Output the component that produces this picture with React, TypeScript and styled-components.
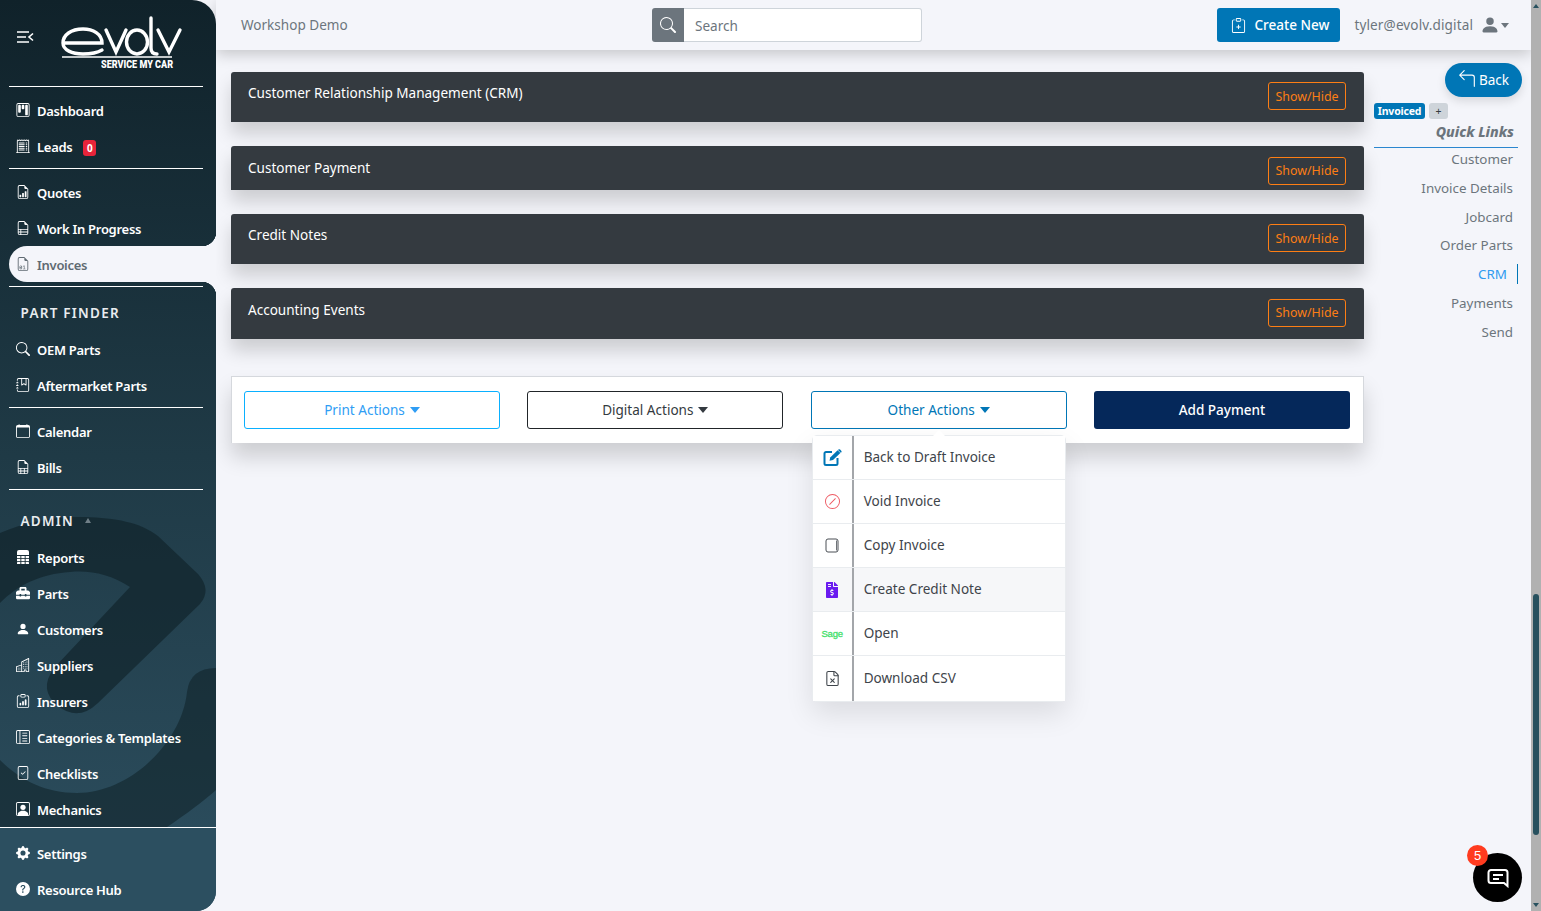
import React from 'react';
import styled, { createGlobalStyle } from 'styled-components';
import {
  BsKanban,
  BsReceiptCutoff,
  BsFileEarmarkBarGraph,
  BsFileEarmarkRuled,
  BsFileEarmarkBinary,
  BsSearch,
  BsJournalBookmark,
  BsCalendar,
  BsFileEarmarkSpreadsheet,
  BsPersonFill,
  BsBuildings,
  BsClipboardData,
  BsLayoutTextSidebarReverse,
  BsFileCheck,
  BsPersonSquare,
  BsGearFill,
  BsQuestionCircleFill,
  BsArrow90DegLeft,
  BsClipboardPlus,
  BsSlashCircle,
} from 'react-icons/bs';
import { FaToolbox, FaFileInvoiceDollar } from 'react-icons/fa';
import { FileX } from 'lucide-react';

const PAGE_BG = '#f4f5fa';
const BLUE = '#0076b6';

const GlobalStyle = createGlobalStyle`
  html, body {
    margin: 0;
    height: 100%;
    overflow: hidden;
    background: ${PAGE_BG};
    font-family: "Noto Sans", "Open Sans", sans-serif;
    font-size: 13.55px;
    color: #495057;
  }
  * {
    box-sizing: border-box;
  }
`;

const Shell = styled.div`
  display: flex;
  height: 911px;
  position: relative;
  overflow: hidden;
`;

/* sidebar */

const Sidebar = styled.aside`
  position: relative;
  z-index: 3;
  flex: 0 0 216px;
  display: flex;
  flex-direction: column;
  height: 911px;
  color: #fff;
  background: linear-gradient(180deg, #10222a 0%, #1f3a46 50%, #2d4f60 100%);
  border-radius: 0 24px 20px 0;
  padding-left: 9px;
`;

const Swoosh = styled.svg`
  position: absolute;
  left: 0;
  top: 0;
  width: 216px;
  height: 911px;
  pointer-events: none;
`;

const LogoRow = styled.div`
  position: relative;
  height: 86px;
  width: 194px;
  flex: none;
`;

const MenuToggle = styled.svg`
  position: absolute;
  left: 7px;
  top: 30px;
  width: 18px;
  height: 15px;
`;

const LogoMark = styled.svg`
  position: absolute;
  left: 52px;
  top: 16px;
  width: 125px;
  height: 44px;
`;

const LogoSub = styled.span`
  position: absolute;
  left: 92px;
  top: 59px;
  font-family: "Roboto", "Liberation Sans", sans-serif;
  font-weight: 900;
  font-size: 11px;
  line-height: 12px;
  white-space: nowrap;
  transform: scaleX(0.82);
  transform-origin: left center;
`;

const Rule = styled.hr`
  position: relative;
  flex: none;
  width: 194px;
  height: 1px;
  border: 0;
  margin: 0 0 6px;
  background: #fff;
`;

const SpacedRule = styled(Rule)`
  margin-top: 3px;
`;

const NavRow = styled.a<{ $active?: boolean }>`
  position: relative;
  flex: none;
  display: flex;
  align-items: center;
  height: 36px;
  padding-left: 7px;
  padding-top: ${(p) => (p.$active ? '2px' : '0')};
  font-size: 13px;
  font-weight: 600;
  letter-spacing: -0.28px;
  color: ${(p) => (p.$active ? '#5f6a72' : '#fff')};
  background: ${(p) => (p.$active ? PAGE_BG : 'transparent')};
  border-radius: ${(p) => (p.$active ? '18px 0 0 18px' : '0')};
  margin-top: ${(p) => (p.$active ? '-1px' : '0')};
  margin-bottom: ${(p) => (p.$active ? '1px' : '0')};

  ${(p) =>
    p.$active &&
    `
    &::before, &::after {
      content: '';
      position: absolute;
      right: 0;
      width: 14px;
      height: 14px;
    }
    &::before {
      top: -14px;
      background: radial-gradient(circle at 0 0, transparent 14px, ${PAGE_BG} 14.5px);
    }
    &::after {
      bottom: -14px;
      background: radial-gradient(circle at 0 100%, transparent 14px, ${PAGE_BG} 14.5px);
    }
  `}
`;

const NavIcon = styled.span`
  flex: 0 0 14px;
  display: flex;
  justify-content: center;
  margin-right: 7px;
  font-size: 14px;
  margin-top: -3px;
`;

const Count = styled.span`
  margin-left: 11px;
  margin-top: 1px;
  width: 13px;
  height: 16px;
  border-radius: 3px;
  background: #e8243a;
  color: #fff;
  font-size: 10px;
  font-weight: 700;
  line-height: 16px;
  text-align: center;
  letter-spacing: 0;
`;

const SectionTitle = styled.div<{ $tall?: boolean }>`
  position: relative;
  flex: none;
  display: flex;
  align-items: center;
  height: 39px;
  margin-top: ${(p) => (p.$tall ? '5px' : '0')};
  padding-left: 11.5px;
  font-size: 13.5px;
  font-weight: 600;
  letter-spacing: 1.25px;
  color: #e9ecef;
`;

const SectionCaret = styled.span`
  width: 0;
  height: 0;
  margin-left: 11px;
  border-left: 3.5px solid transparent;
  border-right: 3.5px solid transparent;
  border-bottom: 5px solid #6f7f87;
`;

const SideFooter = styled.div`
  position: absolute;
  left: 0;
  right: 0;
  bottom: 0;
  height: 84px;
  padding: 8px 0 0 9px;
  background: #2c4f60;
  border-top: 1px solid #fff;
  border-radius: 0 0 20px 0;
`;

/* main column */

const Main = styled.div`
  flex: 1;
  min-width: 0;
  display: flex;
  flex-direction: column;
`;

const TopBar = styled.header`
  position: relative;
  z-index: 2;
  flex: 0 0 50px;
  display: flex;
  align-items: center;
  padding: 0 22px 0 25px;
  background: ${PAGE_BG};
  box-shadow: 0 4px 14px rgba(0, 0, 0, 0.2);
`;

const Workspace = styled.span`
  flex: 0 0 411px;
  margin-bottom: 1px;
  color: #6c757d;
`;

const SearchGroup = styled.div`
  display: flex;
  width: 270px;
  height: 34px;
`;

const SearchAddon = styled.span`
  flex: 0 0 32px;
  display: flex;
  align-items: center;
  justify-content: center;
  background: #6c757d;
  color: #fff;
  border-radius: 3px 0 0 3px;
  font-size: 16px;
`;

const SearchInput = styled.input`
  flex: 1;
  min-width: 0;
  padding: 2px 11px 0;
  border: 1px solid #ced4da;
  border-left: 0;
  border-radius: 0 3px 3px 0;
  background: #fff;
  font: inherit;
  &::placeholder {
    color: #6c757d;
    opacity: 1;
  }
`;

const CreateButton = styled.button`
  margin-left: auto;
  display: flex;
  align-items: center;
  gap: 8px;
  width: 123px;
  height: 34px;
  padding: 0 0 0 14px;
  border: 0;
  border-radius: 3px;
  background: ${BLUE};
  color: #fff;
  font: inherit;
  font-weight: 500;
  svg {
    font-size: 15px;
  }
`;

const UserEmail = styled.span`
  margin-left: 14px;
  color: #6c757d;
  letter-spacing: 0.12px;
`;

const UserIcon = styled.span`
  display: flex;
  margin-left: 7px;
  color: #6c757d;
  font-size: 20px;
`;

const Caret = styled.span<{ $color?: string }>`
  display: inline-block;
  width: 0;
  height: 0;
  border-left: 5px solid transparent;
  border-right: 5px solid transparent;
  border-top: 6px solid ${(p) => p.$color || 'currentColor'};
`;

const UserCaret = styled(Caret)`
  margin-left: 1px;
  border-left-width: 4.5px;
  border-right-width: 4.5px;
  border-top-width: 5px;
  color: #6c757d;
`;

const Body = styled.div`
  flex: 1;
  display: flex;
  padding-left: 15px;
`;

const Content = styled.div`
  flex: 0 0 1133px;
  padding-top: 22px;
`;

const Panel = styled.section<{ $height: number; $top: number }>`
  display: flex;
  justify-content: space-between;
  height: ${(p) => p.$height}px;
  margin-bottom: 24px;
  padding: ${(p) => p.$top}px 18px 0 17px;
  border-radius: 3px 3px 0 0;
  background: #343a40;
  color: #fff;
  box-shadow: 0 12px 18px rgba(0, 0, 0, 0.16);
`;

const PanelTitle = styled.h3`
  margin: 0;
  font-size: 13.55px;
  font-weight: 400;
  line-height: 22px;
`;

const ShowHide = styled.button`
  width: 78px;
  height: 28px;
  padding: 0;
  border: 1px solid #fd7e14;
  border-radius: 3px;
  background: transparent;
  color: #fd7e14;
  font: inherit;
  font-size: 12.4px;
`;

const ActionsCard = styled.div`
  display: grid;
  grid-template-columns: repeat(4, 256px);
  justify-content: space-between;
  margin-top: 37px;
  height: 67px;
  padding: 14px 13px 0 12px;
  background: #fff;
  border: 1px solid #d5d8dd;
  border-width: 1px 1px 0 1px;
  box-shadow: 0 14px 20px rgba(0, 0, 0, 0.16);
`;

const ActionWrap = styled.div`
  position: relative;
`;

const ActionButton = styled.button<{ $border: string; $color: string }>`
  display: flex;
  align-items: center;
  justify-content: center;
  gap: 5px;
  width: 100%;
  height: 38px;
  border: 1px solid ${(p) => p.$border};
  border-radius: 3px;
  background: #fff;
  color: ${(p) => p.$color};
  font: inherit;
`;

const PayButton = styled.button`
  height: 38px;
  border: 0;
  border-radius: 3px;
  background: #05285a;
  color: #fff;
  font: inherit;
  font-weight: 500;
`;

const Dropdown = styled.ul`
  position: absolute;
  left: 1px;
  top: 44px;
  z-index: 2;
  width: 254px;
  margin: 0;
  padding: 0;
  list-style: none;
  background: #fff;
  border: 1px solid #e9ecef;
  border-radius: 5px;
  box-shadow: 0 12px 28px rgba(0, 0, 0, 0.1);

  &::before {
    content: '';
    position: absolute;
    left: 120px;
    top: -6px;
    width: 0;
    height: 0;
    border-left: 6px solid transparent;
    border-right: 6px solid transparent;
    border-bottom: 6px solid #fff;
  }
`;

const DropItem = styled.li<{ $hover?: boolean }>`
  display: flex;
  align-items: stretch;
  height: 44.1px;
  background: ${(p) => (p.$hover ? '#f6f7f9' : '#fff')};
  border-bottom: 1px solid #e9ecef;
  &:last-child {
    border-bottom: 0;
  }
`;

const DropIcon = styled.span<{ $color: string; $size: number }>`
  flex: 0 0 41px;
  display: flex;
  align-items: center;
  justify-content: center;
  border-right: 2px solid #a3a6aa;
  color: ${(p) => p.$color};
  font-size: ${(p) => p.$size}px;
`;

const SageMark = styled.span`
  font-family: "Liberation Sans", sans-serif;
  font-size: 9.5px;
  font-weight: 400;
  letter-spacing: -0.2px;
  color: #3fe06a;
  -webkit-text-stroke: 0.3px #3fe06a;
`;

const DropLabel = styled.span`
  display: flex;
  align-items: center;
  padding: 0 0 1px 10px;
  color: #3e444a;
`;

/* right rail */

const Rail = styled.nav`
  flex: 0 0 144px;
  margin-left: 10px;
  padding-top: 13px;
`;

const BackButton = styled.button`
  display: flex;
  align-items: center;
  justify-content: center;
  gap: 3px;
  width: 77px;
  height: 34px;
  margin: 0 -4px 0 auto;
  padding: 0;
  border: 0;
  border-radius: 17px;
  background: ${BLUE};
  color: #fff;
  font: inherit;
  box-shadow: 0 4px 10px rgba(0, 0, 0, 0.12);
  svg {
    font-size: 18px;
    margin-top: -3px;
  }
`;

const StatusRow = styled.div`
  display: flex;
  gap: 4px;
  margin-top: 6px;
`;

const StatusBadge = styled.span`
  width: 51px;
  height: 16px;
  border-radius: 3px;
  background: ${BLUE};
  color: #fff;
  font-size: 10.5px;
  font-weight: 700;
  line-height: 16px;
  text-align: center;
  letter-spacing: -0.2px;
`;

const PlusBadge = styled.span`
  width: 19px;
  height: 16px;
  border-radius: 3px;
  background: #ced4da;
  color: #343a40;
  font-size: 10.5px;
  line-height: 16px;
  text-align: center;
`;

const RailTitle = styled.div`
  margin-top: 3px;
  padding: 0 4px 5px 0;
  border-bottom: 1px solid #2a86cf;
  text-align: right;
  font-size: 14.2px;
  font-weight: 800;
  font-style: italic;
  line-height: 20px;
  color: #6c757d;
`;

const RailList = styled.div`
  padding-top: 1px;
`;

const RailLink = styled.a<{ $active?: boolean }>`
  display: block;
  height: 20px;
  margin-bottom: 8.8px;
  line-height: 20px;
  padding-right: ${(p) => (p.$active ? '10px' : '4px')};
  text-align: right;
  font-size: 13.4px;
  color: ${(p) => (p.$active ? '#2f9bf0' : '#6c757d')};
  border-right: 1px solid ${(p) => (p.$active ? BLUE : 'transparent')};
`;

/* page scrollbar */

const ScrollTrack = styled.div`
  position: relative;
  z-index: 4;
  flex: 0 0 10px;
  height: 911px;
  background: #b1b1b1;
`;

const ScrollThumb = styled.div`
  position: absolute;
  left: 2px;
  top: 594px;
  width: 6px;
  height: 241px;
  border-radius: 3px;
  background: #27505e;
`;

const ScrollArrow = styled.span<{ $down?: boolean }>`
  position: absolute;
  left: 2px;
  width: 0;
  height: 0;
  border-left: 3px solid transparent;
  border-right: 3px solid transparent;
  ${(p) =>
    p.$down
      ? 'bottom: 4px; border-top: 4px solid #27505e;'
      : 'top: 4px; border-bottom: 4px solid #27505e;'}
`;

/* chat launcher */

const ChatBubble = styled.button`
  position: absolute;
  left: 1473px;
  top: 853px;
  z-index: 5;
  display: flex;
  align-items: center;
  justify-content: center;
  width: 49px;
  height: 49px;
  padding: 0;
  border: 0;
  border-radius: 50%;
  background: #000;
`;

const ChatCount = styled.span`
  position: absolute;
  left: -6px;
  top: -8px;
  width: 21px;
  height: 21px;
  border-radius: 50%;
  background: #ff3b1f;
  color: #fff;
  font-size: 13px;
  line-height: 21px;
  text-align: center;
`;

const panels = [
  { title: 'Customer Relationship Management (CRM)', height: 50, top: 10 },
  { title: 'Customer Payment', height: 44, top: 10.6 },
  { title: 'Credit Notes', height: 50, top: 10 },
  { title: 'Accounting Events', height: 51, top: 10.6 },
];

const quickLinks = ['Customer', 'Invoice Details', 'Jobcard', 'Order Parts', 'CRM', 'Payments', 'Send'];

const CopyGlyph = () => (
  <svg width='14' height='15' viewBox='0 0 14 15' fill='none' stroke='#4a4f55' strokeWidth='1'>
    <rect x='1' y='1' width='12' height='13' rx='2' />
    <path d='M11.5 2.5v10' strokeWidth='0.8' />
  </svg>
);

const EditGlyph = () => (
  <svg width='19' height='17' viewBox='0 0 19 17' fill='none'>
    <path
      d='M9 3H3a1.5 1.5 0 0 0-1.5 1.5v10A1.5 1.5 0 0 0 3 16h10a1.5 1.5 0 0 0 1.5-1.5V9'
      stroke={BLUE}
      strokeWidth='2'
    />
    <path d='M6.5 11.8l.7-3.2L14.6 1.2l2.8 2.8L10 11.1z' fill={BLUE} />
    <path d='M15.4.6a1.2 1.2 0 0 1 1.7 0l1.1 1.1a1.2 1.2 0 0 1 0 1.7l-.4.4-2.8-2.8z' fill={BLUE} />
  </svg>
);

const ReportsGlyph = () => (
  <svg width='12' height='14' viewBox='0 0 12 14' fill='#fff'>
    <path d='M2 0h8a2 2 0 0 1 2 2v3H0V2a2 2 0 0 1 2-2z' />
    <rect x='0' y='6' width='3.4' height='2.2' />
    <rect x='4.3' y='6' width='3.4' height='2.2' />
    <rect x='8.6' y='6' width='3.4' height='2.2' />
    <rect x='0' y='9' width='3.4' height='2.2' />
    <rect x='4.3' y='9' width='3.4' height='2.2' />
    <rect x='8.6' y='9' width='3.4' height='2.2' />
    <rect x='0' y='12' width='3.4' height='2' rx='0.6' />
    <rect x='4.3' y='12' width='3.4' height='2' />
    <rect x='8.6' y='12' width='3.4' height='2' rx='0.6' />
  </svg>
);

const ChatGlyph = () => (
  <svg width='22' height='20' viewBox='0 0 22 20' fill='none' stroke='#fff' strokeWidth='2'>
    <path d='M4 2h14a2.5 2.5 0 0 1 2.5 2.5V18l-3.5-3H4a2.5 2.5 0 0 1-2.5-2.5v-8A2.5 2.5 0 0 1 4 2z' />
    <path d='M6 7h10M6 11h6' />
  </svg>
);

export default function App() {
  return (
    <Shell>
      <GlobalStyle />
      <Sidebar>
        <Swoosh viewBox='0 0 216 911'>
          <path
            d='M0 533C25 522 55 516 85 517C115 518 140 522 158 536L198 574Q212 590 200 604L98 703Q78 722 58 706Q38 690 54 668L130 587C110 574 90 570 70 572C40 574 18 585 0 603Z'
            fill='#0f2027'
            fillOpacity='0.62'
          />
          <path
            d='M216 668Q190 668 187 692C182 742 130 793 77 793C45 793 20 780 0 760V827H167C185 815 205 800 216 790Z'
            fill='#0f2027'
            fillOpacity='0.55'
          />
        </Swoosh>

        <LogoRow>
          <MenuToggle viewBox='0 0 18 15' fill='none' stroke='#fff' strokeWidth='1.6'>
            <path d='M1 2h12M1 7h9M1 12h12M17 3.5L13 7l4 3.5' />
          </MenuToggle>
          <LogoMark viewBox='0 0 125 44' fill='none' stroke='#fff' strokeWidth='3.4' strokeLinecap='round'>
            <path d='M2 27H41C41 18 32 13 22 13C10 13 2 19 2 27C2 34 11 38 22 38C30 38 36 37 41 34' />
            <path d='M45 14L55 36L65 14' />
            <ellipse cx='76' cy='26' rx='10.5' ry='12' />
            <path d='M90 2V32Q90 38 96 38' />
            <path d='M97 14L108 36L119 14' />
            <path d='M1 41H111' strokeWidth='1.5' strokeLinecap='butt' />
          </LogoMark>
          <LogoSub>SERVICE MY CAR</LogoSub>
        </LogoRow>
        <Rule />

        <NavRow><NavIcon><BsKanban /></NavIcon>Dashboard</NavRow>
        <NavRow>
          <NavIcon><BsReceiptCutoff /></NavIcon>Leads<Count>0</Count>
        </NavRow>
        <SpacedRule />

        <NavRow><NavIcon><BsFileEarmarkBarGraph /></NavIcon>Quotes</NavRow>
        <NavRow><NavIcon><BsFileEarmarkRuled /></NavIcon>Work In Progress</NavRow>
        <NavRow $active><NavIcon><BsFileEarmarkBinary /></NavIcon>Invoices</NavRow>
        <SpacedRule />

        <SectionTitle>PART FINDER</SectionTitle>
        <NavRow><NavIcon><BsSearch /></NavIcon>OEM Parts</NavRow>
        <NavRow><NavIcon><BsJournalBookmark /></NavIcon>Aftermarket Parts</NavRow>
        <SpacedRule />

        <NavRow><NavIcon><BsCalendar /></NavIcon>Calendar</NavRow>
        <NavRow><NavIcon><BsFileEarmarkSpreadsheet /></NavIcon>Bills</NavRow>
        <SpacedRule />

        <SectionTitle $tall>ADMIN<SectionCaret /></SectionTitle>
        <NavRow><NavIcon><ReportsGlyph /></NavIcon>Reports</NavRow>
        <NavRow><NavIcon><FaToolbox /></NavIcon>Parts</NavRow>
        <NavRow><NavIcon><BsPersonFill /></NavIcon>Customers</NavRow>
        <NavRow><NavIcon><BsBuildings /></NavIcon>Suppliers</NavRow>
        <NavRow><NavIcon><BsClipboardData /></NavIcon>Insurers</NavRow>
        <NavRow><NavIcon><BsLayoutTextSidebarReverse /></NavIcon>Categories &amp; Templates</NavRow>
        <NavRow><NavIcon><BsFileCheck /></NavIcon>Checklists</NavRow>
        <NavRow><NavIcon><BsPersonSquare /></NavIcon>Mechanics</NavRow>

        <SideFooter>
          <NavRow><NavIcon><BsGearFill /></NavIcon>Settings</NavRow>
          <NavRow><NavIcon><BsQuestionCircleFill /></NavIcon>Resource Hub</NavRow>
        </SideFooter>
      </Sidebar>

      <Main>
        <TopBar>
          <Workspace>Workshop Demo</Workspace>
          <SearchGroup>
            <SearchAddon><BsSearch /></SearchAddon>
            <SearchInput placeholder='Search' />
          </SearchGroup>
          <CreateButton><BsClipboardPlus />Create New</CreateButton>
          <UserEmail>tyler@evolv.digital</UserEmail>
          <UserIcon><BsPersonFill /></UserIcon>
          <UserCaret />
        </TopBar>

        <Body>
          <Content>
            {panels.map((panel) => (
              <Panel key={panel.title} $height={panel.height} $top={panel.top}>
                <PanelTitle>{panel.title}</PanelTitle>
                <ShowHide>Show/Hide</ShowHide>
              </Panel>
            ))}

            <ActionsCard>
              <ActionButton $border='#0ab0ff' $color='#2f9df4'>Print Actions <Caret /></ActionButton>
              <ActionButton $border='#212529' $color='#343a40'>Digital Actions <Caret /></ActionButton>
              <ActionWrap>
                <ActionButton $border={BLUE} $color={BLUE}>Other Actions <Caret /></ActionButton>
                <Dropdown>
                  <DropItem>
                    <DropIcon $color={BLUE} $size={18}><EditGlyph /></DropIcon>
                    <DropLabel>Back to Draft Invoice</DropLabel>
                  </DropItem>
                  <DropItem>
                    <DropIcon $color='#ee5a63' $size={15}><BsSlashCircle /></DropIcon>
                    <DropLabel>Void Invoice</DropLabel>
                  </DropItem>
                  <DropItem>
                    <DropIcon $color='#4a4f55' $size={15}><CopyGlyph /></DropIcon>
                    <DropLabel>Copy Invoice</DropLabel>
                  </DropItem>
                  <DropItem $hover>
                    <DropIcon $color='#6a1bf0' $size={16}><FaFileInvoiceDollar /></DropIcon>
                    <DropLabel>Create Credit Note</DropLabel>
                  </DropItem>
                  <DropItem>
                    <DropIcon $color='#3fe06a' $size={10}><SageMark>Sage</SageMark></DropIcon>
                    <DropLabel>Open</DropLabel>
                  </DropItem>
                  <DropItem>
                    <DropIcon $color='#3e444a' $size={15}><FileX size={17} strokeWidth={1.5} /></DropIcon>
                    <DropLabel>Download CSV</DropLabel>
                  </DropItem>
                </Dropdown>
              </ActionWrap>
              <PayButton>Add Payment</PayButton>
            </ActionsCard>
          </Content>

          <Rail>
            <BackButton><BsArrow90DegLeft />Back</BackButton>
            <StatusRow>
              <StatusBadge>Invoiced</StatusBadge>
              <PlusBadge>+</PlusBadge>
            </StatusRow>
            <RailTitle>Quick Links</RailTitle>
            <RailList>
              {quickLinks.map((link) => (
                <RailLink key={link} $active={link === 'CRM'}>{link}</RailLink>
              ))}
            </RailList>
          </Rail>
        </Body>
      </Main>

      <ScrollTrack>
        <ScrollArrow />
        <ScrollThumb />
        <ScrollArrow $down />
      </ScrollTrack>

      <ChatBubble>
        <ChatCount>5</ChatCount>
        <ChatGlyph />
      </ChatBubble>
    </Shell>
  );
}
